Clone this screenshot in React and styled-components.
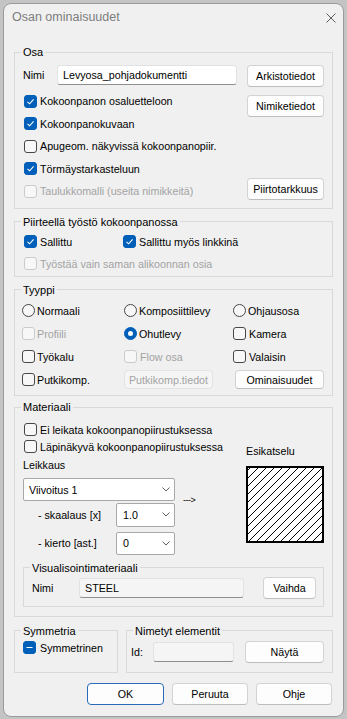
import React from 'react';
import styled, { createGlobalStyle } from 'styled-components';

const GlobalStyle = createGlobalStyle`
  html, body {
    margin: 0;
    padding: 0;
    background: #c4c4c4;
  }
  body {
    font-family: "Liberation Sans", Arial, sans-serif;
    font-size: 10.7px;
    color: #000;
  }
  * {
    box-sizing: border-box;
  }
`;

const Window = styled.div`
  margin: 3px 0 0 3px;
  width: 341px;
  height: 714px;
  background: #f0f0f0;
  border: 1px solid #9b9b9b;
  border-radius: 8px;
  display: flex;
  flex-direction: column;
  overflow: hidden;
`;

const TitleBar = styled.div`
  height: 41px;
  flex: none;
  display: flex;
  align-items: flex-start;
  justify-content: space-between;
  padding: 2px 7px 0 8px;
`;

const Title = styled.div`
  font-size: 12.5px;
  line-height: 22px;
  color: #7d7d7d;
`;

const CloseIcon = styled.svg`
  margin-top: 7px;
  width: 10px;
  height: 10px;
`;

const Body = styled.div`
  padding: 0 10px;
  display: flex;
  flex-direction: column;
`;

const Group = styled.fieldset`
  margin: ${p => p.$mt || 0}px 0 0;
  border: 1px solid #d9d9d9;
  padding: ${p => p.$pad || '0 8px'};
  min-width: 0;
`;

const Legend = styled.legend`
  padding: 0 2px;
  margin-left: -2px;
  line-height: 14px;
  font-size: 11px;
`;

const Row = styled.div`
  display: flex;
  align-items: ${p => p.$align || 'center'};
  height: ${p => p.$h}px;
  margin-top: ${p => p.$mt || 0}px;
  margin-left: ${p => p.$ml || 0}px;
`;

const Label = styled.span`
  flex: none;
  width: ${p => p.$w}px;
  padding-left: ${p => p.$pl || 0}px;
  line-height: ${p => p.$lh || 14}px;
  white-space: nowrap;
  color: ${p => (p.$disabled ? '#a3a3a3' : '#000')};
`;

const TextField = styled.div`
  flex: none;
  width: ${p => p.$w}px;
  height: ${p => p.$h}px;
  background: ${p => (p.$disabled ? '#f5f5f5' : '#fff')};
  border: 1px solid #e2e2e2;
  border-bottom-color: #8e8e8e;
  border-radius: 3px;
  padding-left: 5px;
  display: flex;
  align-items: center;
  white-space: nowrap;
`;

const Button = styled.button`
  flex: none;
  width: ${p => p.$w}px;
  height: ${p => p.$h || 22}px;
  margin-left: ${p => p.$ml || 0}px;
  padding: 0;
  font: inherit;
  color: ${p => (p.disabled ? '#a3a3a3' : '#000')};
  background: ${p => (p.disabled ? '#f5f5f5' : '#fdfdfd')};
  border: 1px solid ${p => (p.$primary ? '#2a6ab8' : p.disabled ? '#e3e3e3' : '#d3d3d3')};
  border-bottom-color: ${p => (p.$primary ? '#2a6ab8' : p.disabled ? '#e3e3e3' : '#bdbdbd')};
  border-radius: 4px;
`;

const Option = styled.div`
  display: flex;
  align-items: center;
  gap: ${p => p.$gap || 3}px;
  height: ${p => p.$h || 22}px;
  margin-left: ${p => p.$ml || 0}px;
  white-space: nowrap;
  color: ${p => (p.$disabled ? '#a3a3a3' : '#000')};
  grid-column: ${p => (p.$wide ? '1 / -1' : 'auto')};
`;

const Box = styled.span`
  flex: none;
  width: 13px;
  height: 13px;
  border-radius: 3px;
  border: 1px solid ${p => (p.$on ? '#005fb8' : p.$disabled ? '#cbcbcb' : '#474747')};
  background: ${p => (p.$on ? '#005fb8' : '#f7f7f7')};
  display: flex;
  align-items: center;
  justify-content: center;
`;

const Dot = styled.span`
  flex: none;
  width: 13px;
  height: 13px;
  border-radius: 50%;
  border: 1px solid ${p => (p.$on ? '#005fb8' : '#474747')};
  background: ${p => (p.$on ? '#005fb8' : '#f7f7f7')};
  display: flex;
  align-items: center;
  justify-content: center;

  &::after {
    content: '';
    display: ${p => (p.$on ? 'block' : 'none')};
    width: 5px;
    height: 5px;
    border-radius: 50%;
    background: #fff;
  }
`;

const Check = ({ label, on, mixed, disabled, ml, h, gap, wide }) => (
  <Option $disabled={disabled} $ml={ml} $h={h} $gap={gap} $wide={wide}>
    <Box $on={on || mixed} $disabled={disabled}>
      {on && (
        <svg width="9" height="9" viewBox="0 0 9 9">
          <path d="M1.5 4.8 L3.6 6.8 L7.6 2.3" fill="none" stroke="#fff" strokeWidth="1.1" />
        </svg>
      )}
      {mixed && (
        <svg width="7" height="7" viewBox="0 0 7 7">
          <path d="M0.5 3.5 H6.5" stroke="#fff" strokeWidth="1.2" />
        </svg>
      )}
    </Box>
    {label}
  </Option>
);

const Radio = ({ label, on }) => (
  <Option $gap={2}>
    <Dot $on={on} />
    {label}
  </Option>
);

const OsaGrid = styled.div`
  margin-top: 3px;
  display: grid;
  grid-template-columns: 1fr 77px;
`;

const CheckList = styled.div`
  display: flex;
  flex-direction: column;
`;

const SideButtons = styled.div`
  display: flex;
  flex-direction: column;
  justify-content: space-between;
  padding: 5px 0 3px;
`;

const TwoCol = styled.div`
  display: grid;
  grid-template-columns: 100px 1fr;
`;

const TypeGrid = styled.div`
  margin-left: -1px;
  display: grid;
  grid-template-columns: 102px 109px 1fr;
  grid-auto-rows: 23px;
  align-items: center;
`;

const MatTop = styled.div`
  display: grid;
  grid-template-columns: 1fr 78px;
`;

const Column = styled.div`
  display: flex;
  flex-direction: column;
`;

const Caption = styled.div`
  line-height: 14px;
  margin-top: ${p => p.$mt || 0}px;
`;

const Combo = styled.div`
  flex: none;
  width: ${p => p.$w}px;
  height: ${p => p.$h || 23}px;
  background: #fff;
  border: 1px solid #a8a8a8;
  border-radius: 2px;
  display: flex;
  align-items: center;
  justify-content: space-between;
  padding: 0 4px 0 ${p => p.$pl || 5}px;
`;

const Arrow = styled.span`
  margin: 0 0 -4px 8px;
  font-size: 9px;
  line-height: 10px;
  letter-spacing: -0.5px;
`;

const Preview = styled.svg`
  display: block;
  margin-top: 8px;
  width: 78px;
  height: 77px;
  border: 2px solid #000;
  background: #fff;
`;

const BottomGroups = styled.div`
  margin-top: 7px;
  display: grid;
  grid-template-columns: 104px 1fr;
  gap: 8px;
`;

const Footer = styled.div`
  margin-top: 10px;
  padding-right: 1px;
  display: flex;
  justify-content: flex-end;
  gap: 8px;
`;

const Chevron = () => (
  <svg width="8" height="5" viewBox="0 0 8 5">
    <path d="M0.5 0.5 L4 4 L7.5 0.5" fill="none" stroke="#606060" strokeWidth="1" />
  </svg>
);

const hatch = [];
for (let i = -80; i <= 80; i += 8) {
  hatch.push(<line key={i} x1={i} y1="74" x2={i + 74} y2="0" stroke="#000" strokeWidth="1" />);
}

export default function App() {
  return (
    <>
      <GlobalStyle />
      <Window>
        <TitleBar>
          <Title>Osan ominaisuudet</Title>
          <CloseIcon viewBox="0 0 10 10">
            <path d="M0.5 0.5 L9.5 9.5 M9.5 0.5 L0.5 9.5" stroke="#5c5c5c" strokeWidth="1" />
          </CloseIcon>
        </TitleBar>

        <Body>
          <Group $pad="6px 8px 5px">
            <Legend>Osa</Legend>
            <Row $h={22} $align="flex-start">
              <Label $w={34} $lh={20}>Nimi</Label>
              <TextField $w={180} $h={20}>Levyosa_pohjadokumentti</TextField>
              <Button $w={77} $ml={10}>Arkistotiedot</Button>
            </Row>
            <OsaGrid>
              <CheckList>
                <Check label="Kokoonpanon osaluetteloon" on ml={1} h={22.5} />
                <Check label="Kokoonpanokuvaan" on ml={1} h={22.5} />
                <Check label="Apugeom. näkyvissä kokoonpanopiir." ml={1} h={22.5} />
                <Check label="Törmäystarkasteluun" on ml={1} h={22.5} />
                <Check label="Taulukkomalli (useita nimikkeitä)" disabled ml={1} h={22.5} />
              </CheckList>
              <SideButtons>
                <Button $w={77}>Nimiketiedot</Button>
                <Button $w={77}>Piirtotarkkuus</Button>
              </SideButtons>
            </OsaGrid>
          </Group>

          <Group $mt={6} $pad="2px 8px 1px">
            <Legend>Piirteellä työstö kokoonpanossa</Legend>
            <TwoCol>
              <Check label="Sallittu" on ml={1} />
              <Check label="Sallittu myös linkkinä" on />
              <Check label="Työstää vain saman alikoonnan osia" disabled ml={1} wide />
            </TwoCol>
          </Group>

          <Group $mt={6} $pad="2.5px 8px 4px">
            <Legend>Tyyppi</Legend>
            <TypeGrid>
              <Radio label="Normaali" />
              <Radio label="Komposiittilevy" />
              <Radio label="Ohjausosa" />
              <Check label="Profiili" disabled gap={2} />
              <Radio label="Ohutlevy" on />
              <Check label="Kamera" />
              <Check label="Työkalu" gap={2} />
              <Check label="Flow osa" disabled />
              <Check label="Valaisin" />
              <Check label="Putkikomp." gap={2} />
              <Button $w={89} $h={19} disabled>Putkikomp.tiedot</Button>
              <Button $w={89} $h={19} $ml={2}>Ominaisuudet</Button>
            </TypeGrid>
          </Group>

          <Group $mt={4} $pad="7px 8px 9px">
            <Legend>Materiaali</Legend>
            <MatTop>
              <Column>
                <Check label="Ei leikata kokoonpanopiirustuksessa" ml={1} h={17} />
                <Check label="Läpinäkyvä kokoonpanopiirustuksessa" ml={1} h={17} />
                <Caption $mt={3}>Leikkaus</Caption>
                <Row $h={23} $mt={6} $align="flex-end">
                  <Combo $w={152}>
                    Viivoitus 1
                    <Chevron />
                  </Combo>
                  <Arrow>---&gt;</Arrow>
                </Row>
                <Row $h={23.5} $mt={2}>
                  <Label $w={93} $pl={15}>- skaalaus [x]</Label>
                  <Combo $w={59} $h={23.5} $pl={6}>
                    1.0
                    <Chevron />
                  </Combo>
                </Row>
                <Row $h={23} $mt={5}>
                  <Label $w={93} $pl={15}>- kierto [ast.]</Label>
                  <Combo $w={59} $pl={6}>
                    0
                    <Chevron />
                  </Combo>
                </Row>
              </Column>
              <Column>
                <Caption $mt={23}>Esikatselu</Caption>
                <Preview viewBox="0 0 74 73" preserveAspectRatio="none">
                  {hatch}
                </Preview>
              </Column>
            </MatTop>

            <Group $mt={6} $pad="2px 8px 7px">
              <Legend>Visualisointimateriaali</Legend>
              <Row $h={22}>
                <Label $w={47}>Nimi</Label>
                <TextField $w={165} $h={20} $disabled>STEEL</TextField>
                <Button $w={53} $ml={19}>Vaihda</Button>
              </Row>
            </Group>
          </Group>

          <BottomGroups>
            <Group $pad="0 8px 13px">
              <Legend>Symmetria</Legend>
              <Check label="Symmetrinen" mixed h={20} gap={4} />
            </Group>
            <Group $pad="3px 8px 9px">
              <Legend>Nimetyt elementit</Legend>
              <Row $h={22} $ml={-4}>
                <Label $w={22}>Id:</Label>
                <TextField $w={81} $h={20} $disabled />
                <Button $w={79} $ml={11}>Näytä</Button>
              </Row>
            </Group>
          </BottomGroups>

          <Footer>
            <Button $w={77} $primary>OK</Button>
            <Button $w={76}>Peruuta</Button>
            <Button $w={76}>Ohje</Button>
          </Footer>
        </Body>
      </Window>
    </>
  );
}
